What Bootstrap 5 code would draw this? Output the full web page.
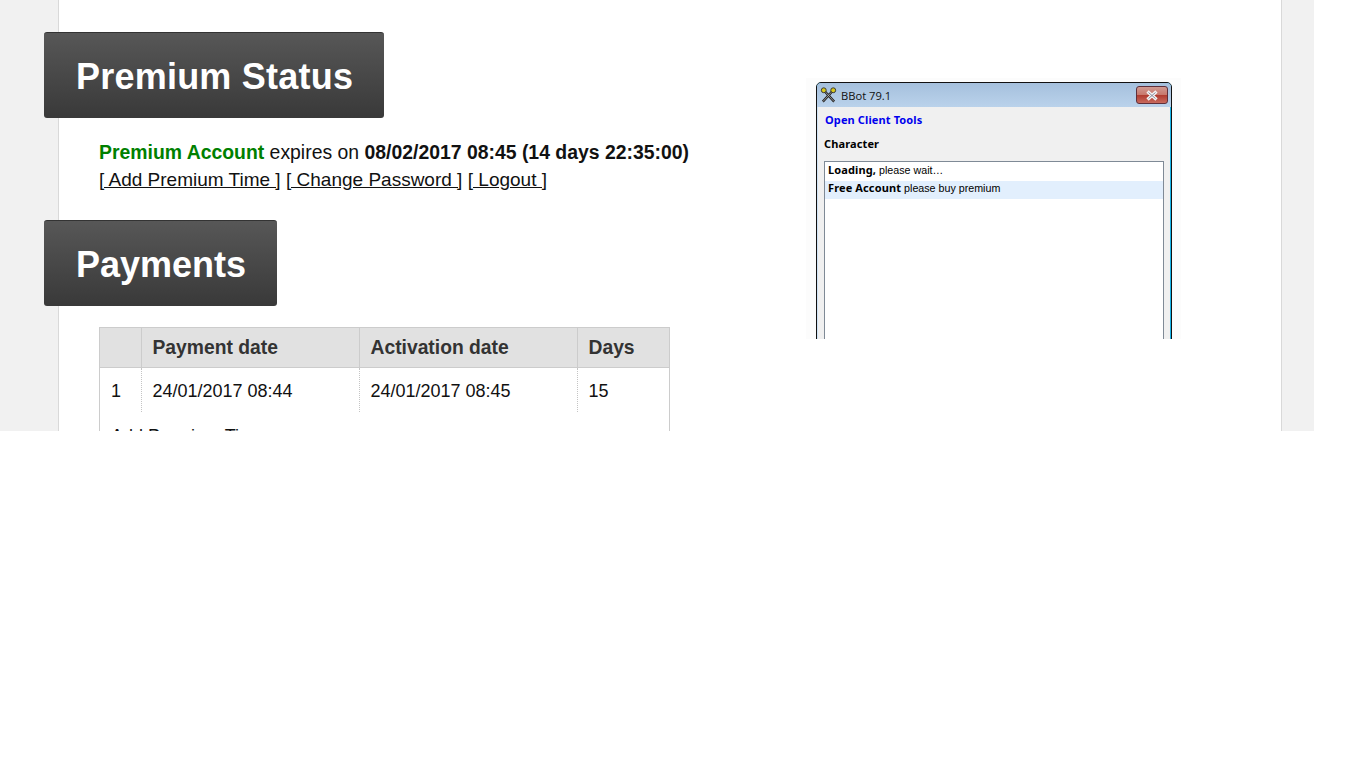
<!DOCTYPE html>
<html lang="en">
<head>
<meta charset="utf-8">
<title>Premium Status</title>
<link href="https://cdn.jsdelivr.net/npm/bootstrap@5.3.0/dist/css/bootstrap.min.css" rel="stylesheet">
<style>
body{background:#fff;font-family:"Liberation Sans",Arial,sans-serif;color:#111;margin:0}
.page-shell{width:1314px;height:431px;overflow:hidden;background:#f1f1f1}
.sheet{width:1224px;margin-left:58px;min-height:100%;background:#fff;border-left:1px solid #d9d9d9;border-right:1px solid #d9d9d9;padding-top:32px}
.left-col{width:747px}
.band{display:inline-block;margin:0 0 0 -15px;height:86px;padding:0 31px 0 32px;font-size:36px;font-weight:700;line-height:87px;color:#fff;background:linear-gradient(#575757,#393939);border-top:1px solid #333;border-radius:3px;vertical-align:top}
.band-wide{letter-spacing:.22px}
.band-wrap{height:86px}
.status{margin:21px 0 27px 40px;font-size:19.4px;line-height:27px}
.status a{color:#111;text-decoration:underline;font-size:19px}
.ok{color:#008000}
.pay-box{margin-left:40px;width:571px;border:1px solid #ccc;margin-top:21px;background:#fff}
.pay-table{width:569px;font-size:18px;border-collapse:collapse;table-layout:fixed;color:#111}
.pay-table th{background:#e1e1e1;color:#333;font-size:19.3px;font-weight:700;height:39px;padding:2px 10px 0 11px;border-right:1px solid #ccc;border-bottom:1px solid #ccc}
.pay-table td{height:45px;padding:3px 10px 0 11px;border-right:1px dotted #c4c4c4}
.pay-table th:last-child,.pay-table td:last-child{border-right:0}
.pay-table .idx{width:41px}
.pay-table .dt{width:218px}
.add-line{font-size:18px;padding:11px 10px 11px 11px}
.add-line a{color:#111;text-decoration:none}
.shot-halo{width:375px;height:261px;margin-top:46px;padding:4px 9px 0 10px;background:#fcfcfc;overflow:hidden}
.win{height:400px;border:1px solid #111;border-radius:5px 5px 0 0;background:#18b4e8;padding-right:1px;overflow:hidden}
.win-title{height:24px;padding:0 3px 0 3px;background:linear-gradient(#a5c0dd,#bad2eb);font:11.2px "Open Sans","DejaVu Sans",sans-serif;color:#111;margin-right:-1px}
.win-close{width:32px;height:18px;background:linear-gradient(#d09a92 0,#c8776b 50%,#b03a2e 50%,#c86a5e 100%);border:1px solid #5f2f3a;border-radius:3px}
.win-body{height:400px;padding:0 6px 0 6px;border-left:1px solid #cfe3f5;background:#f0f0f0;font:11px/14px "Liberation Sans",sans-serif;color:#000}
.win-body b,.win-link,.win-label{font-family:"Noto Sans","DejaVu Sans",sans-serif;font-weight:700;letter-spacing:.12px}
.win-link{display:block;padding:6px 1px 0;height:24px;color:#0000ee}
.win-label{padding-top:6px;height:30px}
.win-list{height:300px;background:#fff;border:1px solid #7f8a96;font-size:10.7px}
.win-list b{font-size:11px}
.win-row{height:18px;line-height:16px;padding:0 3px}
.win-row.first{height:19px}
.win-row.sel{background:#e2effd;line-height:14px}
</style>
</head>
<body>
<div class="page-shell">
  <div class="sheet d-flex align-items-start">
    <div class="left-col flex-shrink-0">
      <div class="band-wrap"><h1 class="band band-wide">Premium Status</h1></div>
      <div class="status">
        <strong class="ok">Premium Account</strong> expires on <strong>08/02/2017 08:45 (14 days 22:35:00)</strong><br>
        <a href="#">[ Add Premium Time ]</a> <a href="#">[ Change Password ]</a> <a href="#">[ Logout ]</a>
      </div>
      <div class="band-wrap"><h1 class="band">Payments</h1></div>
      <div class="pay-box">
        <table class="pay-table">
          <thead><tr><th class="idx"></th><th class="dt">Payment date</th><th class="dt">Activation date</th><th>Days</th></tr></thead>
          <tbody><tr><td>1</td><td>24/01/2017 08:44</td><td>24/01/2017 08:45</td><td>15</td></tr></tbody>
        </table>
        <div class="add-line"><a href="#">Add Premium Time</a></div>
      </div>
    </div>
    <div class="shot-halo flex-shrink-0">
      <div class="win">
        <div class="win-title d-flex align-items-center">
          <svg width="17" height="18" viewBox="0 0 18 18" class="me-1 flex-shrink-0" aria-hidden="true">
            <path d="M4 4 15 16M14 4 3 16" stroke="#222" stroke-width="2.6" fill="none"/>
            <path d="M4 4 15 16M14 4 3 16" stroke="#ccc" stroke-width=".7" fill="none"/>
            <circle cx="4" cy="4" r="2.6" fill="#d8c81e" stroke="#333" stroke-width="1"/>
            <circle cx="14" cy="4" r="2.6" fill="#d8c81e" stroke="#333" stroke-width="1"/>
          </svg>
          <span class="flex-grow-1">BBot 79.1</span>
          <span class="win-close d-flex align-items-center justify-content-center">
            <svg width="16" height="11" viewBox="0 0 16 11" aria-hidden="true"><path d="M3.5 1.5 12.5 9.500M12.500 1.500 3.500 9.500" stroke="#f4f4f4" stroke-width="3.400"/><path d="M4.500 2.500 11.500 8.500M11.500 2.500 4.500 8.500" stroke="#8b8b9b" stroke-width="1"/></svg>
          </span>
        </div>
        <div class="win-body">
          <a class="win-link text-decoration-none" href="#">Open Client Tools</a>
          <div class="win-label">Character</div>
          <div class="win-list">
            <div class="win-row first"><b>Loading,</b> please wait…</div>
            <div class="win-row sel"><b>Free Account</b> please buy premium</div>
          </div>
        </div>
      </div>
    </div>
  </div>
</div>
</body>
</html>
